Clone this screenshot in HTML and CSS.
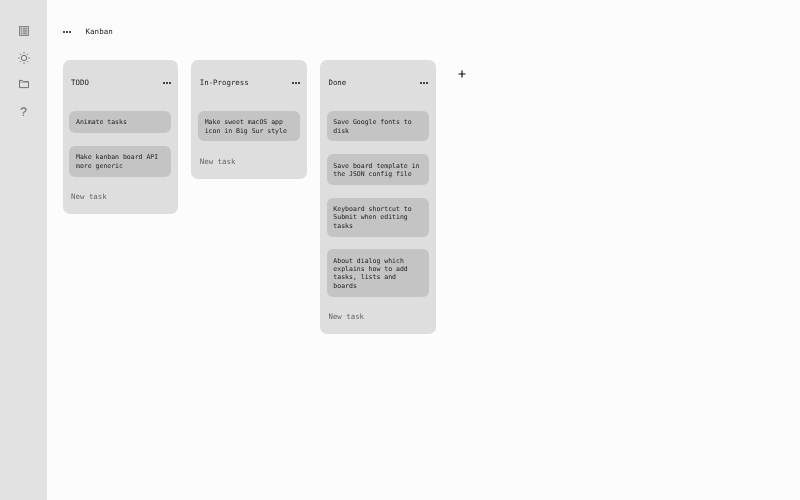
FILE: index.html
```html
<!DOCTYPE html>
<html lang="en">
  <head>
    <meta charset="UTF-8" />
    <title>Kanban</title>
    <link rel="stylesheet" href="styles.css">
  </head>

  <body>
    <nav class="sidebar">
      <svg class="navIcon" viewBox="0 0 10 10">
        <rect x="0.5" y="0.5" width="9" height="9" fill="#c4c4c4" stroke="#808080" stroke-width="0.9" />
        <path d="M2 2.5h1M2 4.2h1M2 5.9h1M2 7.6h1M4 2.5h4M4 4.2h4M4 5.9h4M4 7.6h4" stroke="#777" stroke-width="0.7" />
      </svg>
      <svg class="navIcon sunIcon" viewBox="0 0 12 12">
        <circle cx="6" cy="6" r="2.7" fill="none" stroke="#666" stroke-width="0.9" />
        <path d="M6 0v1.6M6 10.4V12M0 6h1.6M10.4 6H12M1.8 1.8l1.1 1.1M9.1 9.1l1.1 1.1M1.8 10.2l1.1-1.1M9.1 2.9l1.1-1.1" stroke="#666" stroke-width="0.8" />
      </svg>
      <svg class="navIcon" viewBox="0 0 10 10">
        <path d="M0.5 8.6V1.4h3l1 1.2h5v6z" fill="none" stroke="#666" stroke-width="0.9" />
        <path d="M0.5 3.2h9" stroke="#666" stroke-width="0.5" />
      </svg>
      <span class="helpIcon">?</span>
    </nav>

    <main class="main">
      <header class="topbar">
        <span class="dots"><i></i><i></i><i></i></span>
        <span class="boardName">Kanban</span>
      </header>

      <div class="board">
        <section class="list">
          <div class="listHead">
            <span>TODO</span>
            <span class="dots"><i></i><i></i><i></i></span>
          </div>
          <div class="task">Animate tasks</div>
          <div class="task">Make kanban board API more generic</div>
          <div class="newTask">New task</div>
        </section>

        <section class="list">
          <div class="listHead">
            <span>In-Progress</span>
            <span class="dots"><i></i><i></i><i></i></span>
          </div>
          <div class="task">Make sweet macOS app icon in Big Sur style</div>
          <div class="newTask">New task</div>
        </section>

        <section class="list">
          <div class="listHead">
            <span>Done</span>
            <span class="dots"><i></i><i></i><i></i></span>
          </div>
          <div class="task">Save Google fonts to disk</div>
          <div class="task">Save board template in the JSON config file</div>
          <div class="task">Keyboard shortcut to Submit when editing tasks</div>
          <div class="task">About dialog which explains how to add tasks, lists and boards</div>
          <div class="newTask">New task</div>
        </section>

        <svg class="addList" viewBox="0 0 8 8">
          <path d="M4 0.5v7M0.5 4h7" stroke="#111" stroke-width="1.2" />
        </svg>
      </div>
    </main>
  </body>
</html>
```

FILE: styles.css
```css
* {
  box-sizing: border-box;
}

body {
  margin: 0;
  height: 500px;
  display: flex;
  background-color: #fcfcfc;
  color: #222;
  font-family: "DejaVu Sans Mono", "Liberation Mono", monospace;
  text-rendering: geometricPrecision;
  overflow: hidden;
}

.sidebar {
  width: 47px;
  flex: none;
  background-color: #e2e2e2;
  display: flex;
  flex-direction: column;
  align-items: center;
  padding-top: 26px;
  gap: 16.5px;
  will-change: opacity;
}

.navIcon {
  width: 10px;
  height: 10px;
}

.sunIcon {
  width: 12px;
  height: 12px;
  margin: -1px 0;
}

.helpIcon {
  height: 10px;
  margin-top: 1px;
  line-height: 10px;
  font-family: "Liberation Sans", sans-serif;
  font-size: 12.5px;
  color: #666;
}

.main {
  flex: 1;
  padding-left: 15.6px;
  will-change: opacity;
}

.topbar {
  height: 60px;
  padding-top: 3px;
  display: flex;
  align-items: center;
  gap: 15px;
}

.boardName {
  font-size: 7.5px;
  color: #222;
}

.dots {
  display: flex;
  gap: 1px;
}

.dots i {
  width: 2px;
  height: 2px;
  border-radius: 50%;
  background-color: #111;
}

.board {
  display: flex;
  align-items: flex-start;
  gap: 13.1px;
}

.list {
  width: 115.6px;
  padding: 0 7px 0 6.8px;
  background-color: #dedede;
  border-radius: 7px;
}

.listHead {
  height: 51px;
  padding: 0 0.3px 6px 1.7px;
  display: flex;
  justify-content: space-between;
  align-items: center;
  font-size: 7.4px;
  color: #222;
}

.task {
  margin-bottom: 12.9px;
  padding: 7.3px 6.2px 6.6px 6.6px;
  background-color: #c4c4c4;
  border-radius: 6px;
  font-size: 6.5px;
  line-height: 8.3px;
  color: #1c1c1c;
}

.newTask {
  height: 24.5px;
  padding-left: 1.7px;
  font-size: 7.4px;
  line-height: 15.6px;
  color: #666;
}

.addList {
  width: 8px;
  height: 8px;
  margin: 9.5px 0 0 9.3px;
}
```
